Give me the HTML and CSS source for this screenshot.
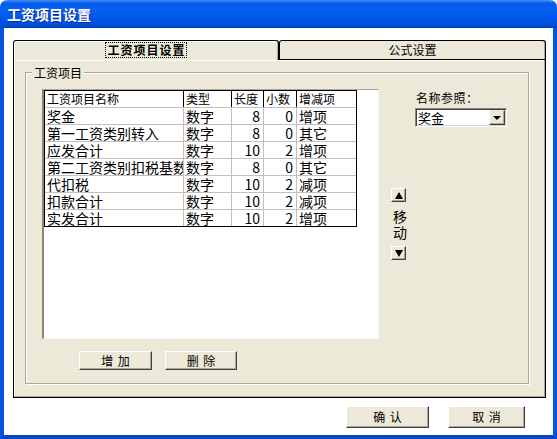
FILE: index.html
```html
<!DOCTYPE html>
<html lang="zh-CN">
<head>
<meta charset="utf-8">
<title>工资项目设置</title>
<link rel="stylesheet" href="styles.css">
</head>
<body>
<div class="window">
  <div class="titlebar"><span class="title">工资项目设置</span></div>
  <div class="client">
    <div class="tabs">
      <div class="tab active"><span class="focus">工资项目设置</span></div>
      <div class="tab">公式设置</div>
    </div>
    <div class="pane">
      <div class="group">
        <span class="group-title">工资项目</span>
        <div class="group-body">
          <div class="left-col">
            <div class="listview">
              <div class="grid">
                <div class="row head">
                  <div class="c c1">工资项目名称</div><div class="c c2">类型</div><div class="c c3">长度</div><div class="c c4">小数</div><div class="c c5">增减项</div>
                </div>
                <div class="row">
                  <div class="c c1">奖金</div><div class="c c2">数字</div><div class="c c3 num">8</div><div class="c c4 num">0</div><div class="c c5">增项</div>
                </div>
                <div class="row">
                  <div class="c c1">第一工资类别转入</div><div class="c c2">数字</div><div class="c c3 num">8</div><div class="c c4 num">0</div><div class="c c5">其它</div>
                </div>
                <div class="row">
                  <div class="c c1">应发合计</div><div class="c c2">数字</div><div class="c c3 num">10</div><div class="c c4 num">2</div><div class="c c5">增项</div>
                </div>
                <div class="row">
                  <div class="c c1">第二工资类别扣税基数</div><div class="c c2">数字</div><div class="c c3 num">8</div><div class="c c4 num">0</div><div class="c c5">其它</div>
                </div>
                <div class="row">
                  <div class="c c1">代扣税</div><div class="c c2">数字</div><div class="c c3 num">10</div><div class="c c4 num">2</div><div class="c c5">减项</div>
                </div>
                <div class="row">
                  <div class="c c1">扣款合计</div><div class="c c2">数字</div><div class="c c3 num">10</div><div class="c c4 num">2</div><div class="c c5">减项</div>
                </div>
                <div class="row">
                  <div class="c c1">实发合计</div><div class="c c2">数字</div><div class="c c3 num">10</div><div class="c c4 num">2</div><div class="c c5">增项</div>
                </div>
              </div>
            </div>
            <div class="list-buttons">
              <button class="btn btn-add">增 加</button>
              <button class="btn btn-del">删 除</button>
            </div>
          </div>
          <div class="mover">
            <button class="arrow-btn"><span class="tri-up"></span></button>
            <div class="mover-label"><div>移</div><div>动</div></div>
            <button class="arrow-btn"><span class="tri-down"></span></button>
          </div>
          <div class="ref">
            <div class="ref-label">名称参照：</div>
            <div class="combo">
              <span class="combo-text">奖金</span>
              <span class="combo-btn"><span class="tri-small"></span></span>
            </div>
          </div>
        </div>
      </div>
    </div>
    <div class="actions">
      <button class="btn btn-ok">确 认</button>
      <button class="btn btn-cancel">取 消</button>
    </div>
  </div>
</div>
</body>
</html>
```
FILE: styles.css
```css
html, body {
  margin: 0;
  padding: 0;
  background: #ffffff;
}
body {
  font-family: "Noto Sans CJK SC", "Noto Sans", sans-serif;
  font-size: 12px;
  line-height: 14px;
  color: #000;
}
.window {
  width: 557px;
  height: 439px;
  display: flex;
  flex-direction: column;
}
.titlebar {
  flex: none;
  height: 28px;
  border-radius: 7px 7px 0 0;
  background: linear-gradient(to bottom, #4a96fc 0px, #1c6cee 2px, #0058ee 4px, #0a62f4 9px, #0058ee 16px, #0052e0 23px, #0046c8 27px, #003cb4 28px);
  display: flex;
  align-items: center;
  padding-left: 7px;
}
.title {
  color: #fff;
  font-weight: bold;
  font-size: 14px;
  line-height: 16px;
  text-shadow: 1px 1px 0 #0a2a8c;
}
.client {
  flex: 1;
  background: #ffffff;
  border-left: 4px solid #0453e2;
  border-right: 4px solid #0453e2;
  border-bottom: 4px solid #0446d0;
  padding: 12px 7px 0 9px;
  display: flex;
  flex-direction: column;
}
.tabs {
  display: flex;
  height: 19px;
  flex: none;
}
.tab {
  box-sizing: border-box;
  height: 19px;
  background: #ece9d8;
  border: 1px solid #000;
  border-bottom: none;
  border-radius: 3px 3px 0 0;
  display: flex;
  justify-content: center;
  align-items: center;
  font-size: 12px;
  line-height: 14px;
  box-shadow: inset -1px 0 0 #aca899;
}
.tab.active {
  width: 266px;
  height: 20px;
  margin-bottom: -1px;
  position: relative;
  z-index: 1;
  align-items: flex-start;
  padding-top: 2px;
  box-shadow: inset 1px 1px 0 #fff, inset -1px 0 0 #aca899;
}
.tab:not(.active) {
  width: 267px;
}
.focus {
  font-weight: bold;
  letter-spacing: 1px;
  outline: 1px dotted #000;
  padding: 0 0 0 1px;
  line-height: 14px;
}
.pane {
  box-sizing: border-box;
  width: 533px;
  height: 339px;
  flex: none;
  background: #ece9d8;
  border: 1px solid #000;
  box-shadow: inset -1px -1px 0 #aca899, inset 1px 1px 0 #fff;
  padding: 12px 16px 0 11px;
}
.group {
  position: relative;
  box-sizing: border-box;
  width: 504px;
  height: 312px;
  border: 1px solid #aca899;
  box-shadow: inset 1px 1px 0 #fff, 1px 1px 0 #fff;
}
.group-title {
  position: absolute;
  top: -8px;
  left: 6px;
  padding: 0 2px;
  background: #ece9d8;
  font-size: 12px;
  line-height: 15px;
}
.group-body {
  display: flex;
  padding: 16px 0 0 16px;
}
.left-col {
  display: flex;
  flex-direction: column;
  flex: none;
}
.listview {
  box-sizing: border-box;
  width: 337px;
  height: 250px;
  background: #fff;
  border-style: solid;
  border-width: 1px 1px 1px 2px;
  border-color: #aca899 #f5f4ee #f5f4ee #8a877a;
}
.grid {
  box-sizing: border-box;
  width: 313px;
  border: 1px solid #000;
}
.row {
  display: flex;
  box-sizing: border-box;
  height: 17px;
  border-bottom: 1px solid #c0c0c0;
}
.row:last-child {
  height: 16px;
  border-bottom: none;
}
.c {
  box-sizing: border-box;
  flex: none;
  height: 16px;
  border-right: 1px solid #c0c0c0;
  padding-left: 2px;
  font-size: 14px;
  line-height: 16px;
  white-space: nowrap;
  overflow-x: clip;
  overflow-y: visible;
}
.head .c {
  font-size: 12px;
  border-right-color: #000;
}
.c1 { width: 139px; }
.c2 { width: 48px; }
.c3 { width: 32px; }
.c4 { width: 33px; }
.c5 { width: 59px; border-right: none !important; }
.num {
  text-align: right;
  padding-left: 0;
  padding-right: 3px;
}
.list-buttons {
  display: flex;
  gap: 13px;
  margin-top: 12px;
  padding-left: 37px;
}
.btn {
  box-sizing: border-box;
  background: #ece9d8;
  border: 1px solid;
  border-color: #fff #404040 #404040 #fff;
  box-shadow: inset -1px -1px 0 #aca899;
  font-family: "Noto Sans CJK SC", "Noto Sans", sans-serif;
  font-size: 12px;
  line-height: 14px;
  word-spacing: 2px;
  color: #000;
  padding: 0;
  margin: 0;
}
.btn-add { width: 73px; height: 19px; }
.btn-del { width: 72px; height: 19px; }
.mover {
  flex: none;
  width: 15px;
  margin-left: 12px;
  padding-top: 99px;
  display: flex;
  flex-direction: column;
  align-items: center;
}
.arrow-btn {
  box-sizing: border-box;
  width: 15px;
  height: 14px;
  background: #ece9d8;
  border: 1px solid;
  border-color: #fff #404040 #404040 #fff;
  box-shadow: inset -1px -1px 0 #aca899;
  padding: 0;
  margin: 0;
  display: flex;
  align-items: center;
  justify-content: center;
}
.tri-up {
  width: 0;
  height: 0;
  border-left: 4px solid transparent;
  border-right: 4px solid transparent;
  border-bottom: 7px solid #000;
}
.tri-down {
  width: 0;
  height: 0;
  border-left: 4px solid transparent;
  border-right: 4px solid transparent;
  border-top: 7px solid #000;
}
.mover-label {
  margin: 6px 0 6px;
  font-size: 14px;
  line-height: 16px;
  text-align: center;
  width: 20px;
  padding-left: 3px;
}
.ref {
  flex: none;
  margin-left: 9px;
  padding-top: 2px;
}
.ref-label {
  font-size: 12px;
  line-height: 14px;
  padding-left: 1px;
  letter-spacing: 0.5px;
}
.combo {
  box-sizing: border-box;
  margin-top: 3px;
  width: 92px;
  height: 19px;
  background: #fff;
  border: 1px solid;
  border-color: #8a877a #fff #fff #8a877a;
  box-shadow: inset 1px 1px 0 #404040, inset -1px -1px 0 #d4d0c8;
  display: flex;
  align-items: center;
  padding: 1px 1px 1px 2px;
}
.combo-text {
  font-size: 13px;
  line-height: 15px;
  flex: 1;
}
.combo-btn {
  box-sizing: border-box;
  width: 16px;
  height: 15px;
  background: #ece9d8;
  border: 1px solid;
  border-color: #ece9d8 #404040 #404040 #fff;
  box-shadow: inset -1px -1px 0 #aca899;
  display: flex;
  align-items: center;
  justify-content: center;
}
.tri-small {
  width: 0;
  height: 0;
  border-left: 4px solid transparent;
  border-right: 4px solid transparent;
  border-top: 4px solid #000;
}
.actions {
  display: flex;
  justify-content: flex-end;
  gap: 19px;
  margin-top: 8px;
  padding-right: 21px;
}
.btn-ok { width: 83px; height: 22px; }
.btn-cancel { width: 77px; height: 22px; }
```
